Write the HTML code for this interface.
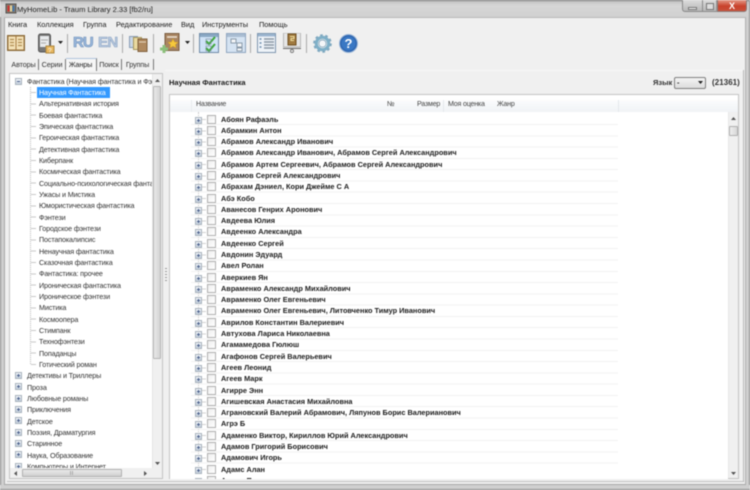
<!DOCTYPE html>
<html><head><meta charset="utf-8">
<style>
html,body{margin:0;padding:0;width:750px;height:490px;overflow:hidden;background:#f0f0f0}
#w{position:absolute;left:0;top:0;width:750px;height:490px;overflow:hidden;filter:blur(.4px);font-family:"Liberation Sans",sans-serif;font-size:7.4px;color:#222;background:#f0f0f0}
#w div,#w svg{position:absolute}
.t{white-space:nowrap;line-height:11px}
.l{left:29px;white-space:nowrap;line-height:11px;font-size:7.2px;letter-spacing:-.14px;color:#333}
.r{left:221px;font-weight:bold;font-size:7.35px;white-space:nowrap;line-height:11px;color:#1c1c1c}
.x{width:5px;height:5px;background:linear-gradient(#f4f7fb,#c4d0de);border:1px solid #a9b3bd;box-sizing:content-box}
.x:after{content:"";position:absolute;left:1px;top:2px;width:3px;height:1px;background:#4a5f8a}
.p:before{content:"";position:absolute;left:2px;top:1px;width:1px;height:3px;background:#4a5f8a}
.b{left:207px;width:7px;height:7px;background:linear-gradient(135deg,#eeeeee,#fff);border:1px solid #b0b0b0;box-sizing:content-box}
.sep{width:1px;height:19px;top:34px;background:#a9a9a9}
.tab{top:59px;height:11px;line-height:11px;text-align:center;font-size:7.2px;letter-spacing:-.1px;color:#333;border-right:1px solid #777}
.h{top:99px;font-size:7.1px;letter-spacing:-.2px;color:#444}
.m{top:18.5px;color:#1a1a1a}
</style></head><body><div id="w">

<!-- Title bar -->
<div style="left:0;top:0;width:750px;height:18px;background:linear-gradient(#bcbcbc,#d6d6d6 30%,#d0d0d0)"></div>
<div style="left:0;top:0;width:750px;height:1px;background:#777"></div>
<div style="left:0;top:17px;width:750px;height:1px;background:#b8b8b8"></div>
<svg style="left:5px;top:3px" width="12" height="12" viewBox="0 0 12 12"><rect x="1" y="1" width="10" height="9" fill="#8a7a68" stroke="#555"/><rect x="2.5" y="2.5" width="2" height="6" fill="#c33"/><rect x="5" y="2.5" width="2" height="6" fill="#e6d8a0"/><rect x="7.5" y="2.5" width="2" height="6" fill="#47a"/></svg>
<div class="t" style="left:17px;top:4px;font-size:7.55px;color:#222">MyHomeLib - Traum Library 2.33 [fb2/ru]</div>
<!-- Window buttons -->
<div style="left:682px;top:0;width:21px;height:12px;background:linear-gradient(#dcdcdc,#b8b8b8);border:1px solid #8a8a8a;border-top:0;border-radius:0 0 0 3px;box-sizing:border-box"></div>
<div style="left:703px;top:0;width:14px;height:12px;background:linear-gradient(#dcdcdc,#b8b8b8);border-bottom:1px solid #8a8a8a;border-right:1px solid #999;box-sizing:border-box"></div>
<div style="left:717px;top:0;width:30px;height:12px;background:linear-gradient(#e49a88,#c9422c 55%,#c8503a);border:1px solid #8a7a78;border-top:0;border-radius:0 0 3px 0;box-sizing:border-box"></div>
<div style="left:688px;top:7px;width:7px;height:1px;background:#f4f4f4;border:1px solid #777;box-sizing:content-box"></div>
<div style="left:706px;top:3px;width:6px;height:5px;border:1px solid #777;background:#ddd"></div>
<div class="t" style="left:717px;top:1px;width:30px;text-align:center;color:#fff;font-weight:bold;font-size:9px;line-height:10px">X</div>

<!-- Frame -->
<div style="left:0;top:17px;width:4px;height:473px;background:#cfcfcf"></div>
<div style="left:0;top:17px;width:1px;height:473px;background:#8a8a8a"></div>
<div style="left:4px;top:18px;width:1px;height:467px;background:#a8a8a8"></div>
<div style="left:745px;top:18px;width:1px;height:467px;background:#b0b0b0"></div>
<div style="left:746px;top:17px;width:4px;height:473px;background:#cfcfcf"></div>
<div style="left:749px;top:0;width:1px;height:490px;background:#8a8a8a"></div>
<div style="left:0;top:485px;width:750px;height:5px;background:#cfcfcf"></div>
<div style="left:4px;top:484px;width:742px;height:1px;background:#a8a8a8"></div>
<div style="left:0;top:489px;width:750px;height:1px;background:#8a8a8a"></div>
<div style="left:7px;top:481px;width:736px;height:1px;background:#c2c2c2"></div>
<div style="left:743px;top:70px;width:1px;height:412px;background:#b8b8b8"></div>

<!-- Menu -->
<div class="t m" style="left:8px">Книга</div>
<div class="t m" style="left:37px">Коллекция</div>
<div class="t m" style="left:83px">Группа</div>
<div class="t m" style="left:116px">Редактирование</div>
<div class="t m" style="left:181px">Вид</div>
<div class="t m" style="left:202px">Инструменты</div>
<div class="t m" style="left:259px">Помощь</div>

<!-- Toolbar -->
<svg style="left:7px;top:35px" width="18" height="16" viewBox="0 0 18 16"><rect x=".5" y=".5" width="17" height="15" fill="#a67c43" stroke="#8a6a3a"/><rect x="1.5" y="1.5" width="7" height="13" fill="#f3e2b8"/><rect x="9.5" y="1.5" width="7" height="13" fill="#f3e2b8"/><path d="M3 4.5h4M3 7.5h4M3 10.5h4M11 4.5h4M11 7.5h4M11 10.5h4" stroke="#b08d50" stroke-width="1.2"/></svg>
<svg style="left:37px;top:33px" width="18" height="21" viewBox="0 0 18 21"><rect x="1.5" y="1" width="12" height="18" rx="2" fill="#777" stroke="#555"/><rect x="3" y="3" width="9" height="11" fill="#e8eaec"/><path d="M4 7h7M4 10h5" stroke="#aaa"/><rect x="9" y="13" width="8" height="7" fill="#e8b860" stroke="#b08840"/><text x="11" y="19.5" font-size="6.5" fill="#fff" font-family="Liberation Sans">?</text></svg>
<svg style="left:58px;top:41px" width="5" height="4"><path d="M0 0h5L2.5 3z" fill="#222"/></svg>
<div class="sep" style="left:67px"></div>
<div class="t" style="left:73px;top:32.5px;font-size:15px;line-height:20px;font-weight:bold;letter-spacing:-1px;color:#9ab8dc;-webkit-text-stroke:.6px #6f8fb8">RU</div>
<div class="t" style="left:98px;top:32.5px;font-size:15px;line-height:20px;font-weight:bold;letter-spacing:-.6px;color:#b6c8de;-webkit-text-stroke:.6px #8fa6c4">EN</div>
<div class="sep" style="left:122px"></div>
<svg style="left:129px;top:36px" width="19" height="16" viewBox="0 0 19 16"><rect x=".5" y=".5" width="8" height="11" fill="#c9d6e6" stroke="#8a9db5"/><rect x="4.5" y="1.5" width="8" height="12" fill="#ead9a0" stroke="#a89860"/><rect x="9" y="3" width="9" height="12.5" fill="#b08a60" stroke="#80603c"/><path d="M10 6h7" stroke="#e4d4bc"/></svg>
<div class="sep" style="left:153px"></div>
<svg style="left:160px;top:33px" width="20" height="20" viewBox="0 0 20 20"><rect x="5" y=".5" width="14" height="17" fill="#a98562" stroke="#7a5c40"/><path d="M7 4h10" stroke="#eadfd0" stroke-width="1.6"/><path d="M13 6l1.5 3 3.4.4-2.5 2.2.7 3.3-3.1-1.7-3.1 1.7.7-3.3-2.5-2.2 3.4-.4z" fill="#f6c93c" stroke="#d8a020" stroke-width=".5"/><path d="M4 12v8M0 16h8" stroke="#8cc07c" stroke-width="3"/></svg>
<svg style="left:185px;top:41px" width="5" height="4"><path d="M0 0h5L2.5 3z" fill="#222"/></svg>
<div class="sep" style="left:193px"></div>
<svg style="left:199px;top:33px" width="20" height="20" viewBox="0 0 20 20"><rect x=".5" y=".5" width="19" height="19" fill="#cfe2f6" stroke="#6f8ba8"/><rect x="1" y="1" width="18" height="3" fill="#8aa8c4"/><path d="M7 8l3 3 6-7" fill="none" stroke="#3fa83a" stroke-width="2"/><path d="M7 15l3 3 6-7" fill="none" stroke="#3fa83a" stroke-width="2"/><rect x="7" y="6" width="5" height="5" fill="none" stroke="#7a8a9a" stroke-width=".6"/><rect x="7" y="13" width="5" height="5" fill="none" stroke="#7a8a9a" stroke-width=".6"/></svg>
<svg style="left:226px;top:33px" width="20" height="20" viewBox="0 0 20 20"><rect x=".5" y=".5" width="19" height="19" fill="#d5e3f2" stroke="#8fa6c0"/><rect x="1" y="1" width="18" height="3" fill="#aabdd2"/><rect x="5" y="6" width="5" height="4" fill="#f4f6f8" stroke="#8a9aaa"/><rect x="11" y="10" width="5" height="4" fill="#f4f6f8" stroke="#8a9aaa"/><rect x="11" y="15" width="5" height="3" fill="#f4f6f8" stroke="#8a9aaa"/></svg>
<div class="sep" style="left:250px"></div>
<svg style="left:257px;top:33px" width="19" height="20" viewBox="0 0 19 20"><rect x=".5" y=".5" width="18" height="19" fill="#eef3f8" stroke="#7f97b0"/><rect x="1" y="1" width="17" height="2.5" fill="#9db6d0"/><path d="M7 6h10M7 9h10M7 12h10M7 15h10" stroke="#8a98a6" stroke-width="1.6"/><path d="M2.5 6h2M2.5 10h2M2.5 14h2" stroke="#6f8fb0" stroke-width="1.6"/></svg>
<svg style="left:283px;top:33px" width="18" height="20" viewBox="0 0 18 20"><rect x=".5" y="0" width="17" height="14" fill="#e6e6e6" stroke="#b8b8b8"/><rect x="5" y="1" width="8" height="11" fill="#a07a40" stroke="#705020"/><path d="M7 3.5h4v2H8v2h3" stroke="#f0e0a0" fill="none"/><path d="M0 15.5h18" stroke="#666"/><circle cx="9" cy="18" r="1.6" fill="#ddd" stroke="#666" stroke-width=".7"/></svg>
<div class="sep" style="left:306px"></div>
<svg style="left:313px;top:34px" width="19" height="19" viewBox="0 0 19 19"><circle cx="9.5" cy="9.5" r="6.2" fill="none" stroke="#7fb0c8" stroke-width="3.2"/><circle cx="9.5" cy="9.5" r="8.2" fill="none" stroke="#7fa8c0" stroke-width="2.2" stroke-dasharray="2.6 2.55"/><circle cx="9.5" cy="9.5" r="3.6" fill="#f4f6f8" stroke="#5f8ba8" stroke-width=".6"/></svg>
<svg style="left:339px;top:34px" width="19" height="19" viewBox="0 0 19 19"><circle cx="9.5" cy="9.5" r="9" fill="#2f66b0" stroke="#9db8d8"/><circle cx="9.5" cy="9.5" r="7" fill="#3a78c4"/><text x="9.5" y="14" text-anchor="middle" font-size="13" font-weight="bold" fill="#fff" font-family="Liberation Sans">?</text></svg>

<!-- Tabs -->
<div class="tab" style="left:9px;width:29px">Авторы</div>
<div class="tab" style="left:39px;width:26px">Серии</div>
<div style="left:66px;top:58px;width:31px;height:13px;background:#f6f6f6;border-top:1px solid #b0c4de;border-right:1px solid #777;box-sizing:border-box"></div>
<div class="tab" style="left:66px;width:29px;border:0;color:#222">Жанры</div>
<div class="tab" style="left:97px;width:24px">Поиск</div>
<div class="tab" style="left:122px;width:31px">Группы</div>

<!-- Left pane -->
<div style="left:9px;top:73px;width:154px;height:406px;background:#fff;border:1px solid #c4c4c4;box-sizing:border-box;overflow:hidden">
  <div style="left:0;top:0;width:152px;height:404px;overflow:hidden">
    <div style="left:20px;top:13px;width:0;height:277px;border-left:1px dotted #bbb"></div>
    <div style="left:21px;top:18px;width:5px;height:280px;background:repeating-linear-gradient(#c8c8c8 0 1px,transparent 1px 11.33px)"></div>
    <div class="x" style="left:5px;top:3.5px"></div>
    <div class="l" style="left:17px;top:2px;width:125px;overflow:hidden">Фантастика (Научная фантастика и Фэнтези)</div>
    <div style="left:27px;top:12.5px;width:73px;height:11px;background:#3399ff"></div>
    <div class="l" style="top:13px;color:#fff">Научная Фантастика</div>
    <div class="l" style="top:24.3px">Альтернативная история</div>
    <div class="l" style="top:35.7px">Боевая фантастика</div>
    <div class="l" style="top:47px">Эпическая фантастика</div>
    <div class="l" style="top:58.3px">Героическая фантастика</div>
    <div class="l" style="top:69.7px">Детективная фантастика</div>
    <div class="l" style="top:81px">Киберпанк</div>
    <div class="l" style="top:92.3px">Космическая фантастика</div>
    <div class="l" style="top:103.7px;width:113px;overflow:hidden">Социально-психологическая фантастика</div>
    <div class="l" style="top:115px">Ужасы и Мистика</div>
    <div class="l" style="top:126.3px">Юмористическая фантастика</div>
    <div class="l" style="top:137.7px">Фэнтези</div>
    <div class="l" style="top:149px">Городское фэнтези</div>
    <div class="l" style="top:160.3px">Постапокалипсис</div>
    <div class="l" style="top:171.7px">Ненаучная фантастика</div>
    <div class="l" style="top:183px">Сказочная фантастика</div>
    <div class="l" style="top:194.3px">Фантастика: прочее</div>
    <div class="l" style="top:205.7px">Ироническая фантастика</div>
    <div class="l" style="top:217px">Ироническое фэнтези</div>
    <div class="l" style="top:228.3px">Мистика</div>
    <div class="l" style="top:239.7px">Космоопера</div>
    <div class="l" style="top:251px">Стимпанк</div>
    <div class="l" style="top:262.3px">Технофэнтези</div>
    <div class="l" style="top:273.7px">Попаданцы</div>
    <div class="l" style="top:285px">Готический роман</div>
    <div class="x p" style="left:5px;top:297.8px"></div><div class="l" style="left:17px;top:296.3px">Детективы и Триллеры</div>
    <div class="x p" style="left:5px;top:309.2px"></div><div class="l" style="left:17px;top:307.7px">Проза</div>
    <div class="x p" style="left:5px;top:320.5px"></div><div class="l" style="left:17px;top:319px">Любовные романы</div>
    <div class="x p" style="left:5px;top:331.8px"></div><div class="l" style="left:17px;top:330.3px">Приключения</div>
    <div class="x p" style="left:5px;top:343.2px"></div><div class="l" style="left:17px;top:341.7px">Детское</div>
    <div class="x p" style="left:5px;top:354.5px"></div><div class="l" style="left:17px;top:353px">Поэзия, Драматургия</div>
    <div class="x p" style="left:5px;top:365.8px"></div><div class="l" style="left:17px;top:364.3px">Старинное</div>
    <div class="x p" style="left:5px;top:377.2px"></div><div class="l" style="left:17px;top:375.7px">Наука, Образование</div>
    <div class="x p" style="left:5px;top:388.5px"></div><div class="l" style="left:17px;top:387px">Компьютеры и Интернет</div>
  </div>
</div>
<!-- left scrollbars -->
<div style="left:152px;top:74px;width:10px;height:394px;background:#f0f0f0;border-left:1px solid #e4e4e4;box-sizing:border-box"></div>
<div style="left:153px;top:86px;width:8px;height:273px;background:linear-gradient(90deg,#e8e8e8,#d4d4d4);border:1px solid #b5b5b5;box-sizing:border-box;border-radius:1px"></div>
<svg style="left:155px;top:79px" width="5" height="4"><path d="M2.5 0L5 3H0z" fill="#555"/></svg>
<svg style="left:155px;top:462px" width="5" height="4"><path d="M2.5 3L5 0H0z" fill="#555"/></svg>
<div style="left:10px;top:468px;width:152px;height:10px;background:#f0f0f0"></div>
<div style="left:22px;top:469px;width:100px;height:8px;background:linear-gradient(#eaeaea,#d0d0d0);border:1px solid #b0b0b0;box-sizing:border-box;border-radius:1px"></div>
<svg style="left:14px;top:471px" width="4" height="5"><path d="M0 2.5L3 0V5z" fill="#555"/></svg>
<svg style="left:144px;top:471px" width="4" height="5"><path d="M3 2.5L0 0V5z" fill="#555"/></svg>
<div style="left:70px;top:471px;width:4px;height:4px;background:repeating-linear-gradient(90deg,#aaa 0 1px,transparent 1px 2px)"></div>

<!-- Splitter dots -->
<div style="left:165px;top:268px;width:2px;height:14px;background:repeating-linear-gradient(#999 0 1px,transparent 1px 3px)"></div>

<!-- Right header -->
<div style="left:165px;top:70px;width:578px;height:1px;background:#f7f7f7"></div>
<div class="t" style="left:169px;top:76.5px;font-weight:bold;color:#1a1a1a;font-size:7.5px">Научная Фантастика</div>
<div class="t" style="left:653px;top:76.5px;font-weight:bold;font-size:7.5px;color:#333">Язык</div>
<div style="left:674px;top:77px;width:32px;height:12px;background:linear-gradient(#f4f4f4,#dcdcdc);border:1px solid #808080;border-radius:2px;box-sizing:border-box"></div>
<div class="t" style="left:677px;top:77px;font-weight:bold">-</div>
<svg style="left:698px;top:81px" width="5" height="4"><path d="M0 0h5L2.5 3z" fill="#222"/></svg>
<div class="t" style="left:712px;top:76.5px;font-weight:bold;font-size:7.9px;color:#333;letter-spacing:.1px">(21361)</div>

<!-- List -->
<div style="left:169px;top:94px;width:570px;height:385px;background:#fff;border:1px solid #c4c4c4;box-sizing:border-box"></div>
<div style="left:170px;top:100px;width:568px;height:12px;background:linear-gradient(#fbfcfd,#f0f3f6)"></div>
<div style="left:191px;top:100px;width:1px;height:12px;background:#e8ebee"></div>
<div style="left:443px;top:100px;width:1px;height:12px;background:#e4e8ec"></div>
<div style="left:618px;top:100px;width:1px;height:12px;background:#e4e8ec"></div>
<div class="t h" style="left:196px">Название</div>
<div class="t h" style="left:387px">№</div>
<div class="t h" style="left:417px">Размер</div>
<div class="t h" style="left:448px">Моя оценка</div>
<div class="t h" style="left:497px">Жанр</div>
<!-- list scrollbar -->
<div style="left:728px;top:112px;width:10px;height:366px;background:#f0f0f0;border-left:1px solid #e8e8e8;box-sizing:border-box"></div>
<div style="left:729px;top:126px;width:9px;height:10px;background:linear-gradient(90deg,#eee,#d8d8d8);border:1px solid #b0b0b0;box-sizing:border-box;border-radius:1px"></div>
<svg style="left:731px;top:117px" width="5" height="4"><path d="M2.5 0L5 3H0z" fill="#555"/></svg>
<svg style="left:731px;top:472px" width="5" height="4"><path d="M2.5 3L5 0H0z" fill="#555"/></svg>

<div style="left:191px;top:124px;width:427px;height:350px;background:repeating-linear-gradient(#f2f2f2 0 1px,transparent 1px 11.29px)"></div>
<div style="left:197.5px;top:112px;width:0;height:366px;border-left:1px dotted #ccc"></div>
<div style="left:202px;top:119px;width:4px;height:355px;background:repeating-linear-gradient(#d0d0d0 0 1px,transparent 1px 11.29px)"></div>

<div class="x p" style="left:195px;top:116.5px"></div><div class="b" style="top:114.5px"></div><div class="r" style="top:113.5px">Абоян Рафаэль</div>
<div class="x p" style="left:195px;top:127.8px"></div><div class="b" style="top:125.8px"></div><div class="r" style="top:124.8px">Абрамкин Антон</div>
<div class="x p" style="left:195px;top:139.1px"></div><div class="b" style="top:137.1px"></div><div class="r" style="top:136.1px">Абрамов Александр Иванович</div>
<div class="x p" style="left:195px;top:150.4px"></div><div class="b" style="top:148.4px"></div><div class="r" style="top:147.4px">Абрамов Александр Иванович, Абрамов Сергей Александрович</div>
<div class="x p" style="left:195px;top:161.7px"></div><div class="b" style="top:159.7px"></div><div class="r" style="top:158.7px">Абрамов Артем Сергеевич, Абрамов Сергей Александрович</div>
<div class="x p" style="left:195px;top:172.9px"></div><div class="b" style="top:170.9px"></div><div class="r" style="top:169.9px">Абрамов Сергей Александрович</div>
<div class="x p" style="left:195px;top:184.2px"></div><div class="b" style="top:182.2px"></div><div class="r" style="top:181.2px">Абрахам Дэниел, Кори Джейме С А</div>
<div class="x p" style="left:195px;top:195.5px"></div><div class="b" style="top:193.5px"></div><div class="r" style="top:192.5px">Абэ Кобо</div>
<div class="x p" style="left:195px;top:206.8px"></div><div class="b" style="top:204.8px"></div><div class="r" style="top:203.8px">Аванесов Генрих Аронович</div>
<div class="x p" style="left:195px;top:218.1px"></div><div class="b" style="top:216.1px"></div><div class="r" style="top:215.1px">Авдеева Юлия</div>
<div class="x p" style="left:195px;top:229.4px"></div><div class="b" style="top:227.4px"></div><div class="r" style="top:226.4px">Авдеенко Александра</div>
<div class="x p" style="left:195px;top:240.7px"></div><div class="b" style="top:238.7px"></div><div class="r" style="top:237.7px">Авдеенко Сергей</div>
<div class="x p" style="left:195px;top:252px"></div><div class="b" style="top:250px"></div><div class="r" style="top:249px">Авдонин Эдуард</div>
<div class="x p" style="left:195px;top:263.3px"></div><div class="b" style="top:261.3px"></div><div class="r" style="top:260.3px">Авел Ролан</div>
<div class="x p" style="left:195px;top:274.6px"></div><div class="b" style="top:272.6px"></div><div class="r" style="top:271.6px">Аверкиев Ян</div>
<div class="x p" style="left:195px;top:285.9px"></div><div class="b" style="top:283.9px"></div><div class="r" style="top:282.9px">Авраменко Александр Михайлович</div>
<div class="x p" style="left:195px;top:297.1px"></div><div class="b" style="top:295.1px"></div><div class="r" style="top:294.1px">Авраменко Олег Евгеньевич</div>
<div class="x p" style="left:195px;top:308.4px"></div><div class="b" style="top:306.4px"></div><div class="r" style="top:305.4px">Авраменко Олег Евгеньевич, Литовченко Тимур Иванович</div>
<div class="x p" style="left:195px;top:319.7px"></div><div class="b" style="top:317.7px"></div><div class="r" style="top:316.7px">Аврилов Константин Валериевич</div>
<div class="x p" style="left:195px;top:331px"></div><div class="b" style="top:329px"></div><div class="r" style="top:328px">Автухова Лариса Николаевна</div>
<div class="x p" style="left:195px;top:342.3px"></div><div class="b" style="top:340.3px"></div><div class="r" style="top:339.3px">Агамамедова Гюлюш</div>
<div class="x p" style="left:195px;top:353.6px"></div><div class="b" style="top:351.6px"></div><div class="r" style="top:350.6px">Агафонов Сергей Валерьевич</div>
<div class="x p" style="left:195px;top:364.9px"></div><div class="b" style="top:362.9px"></div><div class="r" style="top:361.9px">Агеев Леонид</div>
<div class="x p" style="left:195px;top:376.2px"></div><div class="b" style="top:374.2px"></div><div class="r" style="top:373.2px">Агеев Марк</div>
<div class="x p" style="left:195px;top:387.5px"></div><div class="b" style="top:385.5px"></div><div class="r" style="top:384.5px">Агирре Энн</div>
<div class="x p" style="left:195px;top:398.8px"></div><div class="b" style="top:396.8px"></div><div class="r" style="top:395.8px">Агишевская Анастасия Михайловна</div>
<div class="x p" style="left:195px;top:410.1px"></div><div class="b" style="top:408.1px"></div><div class="r" style="top:407.1px">Аграновский Валерий Абрамович, Ляпунов Борис Валерианович</div>
<div class="x p" style="left:195px;top:421.3px"></div><div class="b" style="top:419.3px"></div><div class="r" style="top:418.3px">Агрэ Б</div>
<div class="x p" style="left:195px;top:432.6px"></div><div class="b" style="top:430.6px"></div><div class="r" style="top:429.6px">Адаменко Виктор, Кириллов Юрий Александрович</div>
<div class="x p" style="left:195px;top:443.9px"></div><div class="b" style="top:441.9px"></div><div class="r" style="top:440.9px">Адамов Григорий Борисович</div>
<div class="x p" style="left:195px;top:455.2px"></div><div class="b" style="top:453.2px"></div><div class="r" style="top:452.2px">Адамович Игорь</div>
<div class="x p" style="left:195px;top:466.5px"></div><div class="b" style="top:464.5px"></div><div class="r" style="top:463.5px">Адамс Алан</div>
<div style="left:170px;top:475px;width:558px;height:3.5px;overflow:hidden;background:#fff"><div class="x p" style="left:25px;top:2.5px"></div><div class="b" style="left:37px;top:1px"></div><div class="r" style="left:51px;top:0">Адамс Питер</div></div>

</div></body></html>
